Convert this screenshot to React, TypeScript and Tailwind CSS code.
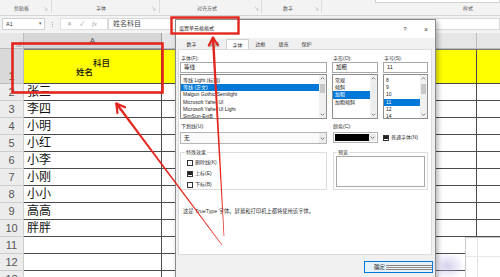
import React from 'react';

type Pt = [number, number];

function taper(a: Pt, b: Pt, w1: number, w2: number) {
  const dx = b[0] - a[0];
  const dy = b[1] - a[1];
  const l = Math.hypot(dx, dy);
  const nx = -dy / l;
  const ny = dx / l;
  const pts = [
    [a[0] + (nx * w1) / 2, a[1] + (ny * w1) / 2],
    [b[0] + (nx * w2) / 2, b[1] + (ny * w2) / 2],
    [b[0] - (nx * w2) / 2, b[1] - (ny * w2) / 2],
    [a[0] - (nx * w1) / 2, a[1] - (ny * w1) / 2],
  ];
  return pts.map((p) => p.map((v) => v.toFixed(1)).join(',')).join(' ');
}

function Chevron({ up }: { up?: boolean }) {
  return (
    <svg width="7" height="7" viewBox="0 0 7 7" className="shrink-0">
      <polyline
        points={up ? '1.8,4.3 3.5,2.6 5.2,4.3' : '1.8,2.7 3.5,4.4 5.2,2.7'}
        fill="none"
        stroke="#606060"
        strokeWidth="0.8"
      />
    </svg>
  );
}

function VScroll({ thumb }: { thumb: string }) {
  return (
    <div className="w-[7px] h-full bg-[#f0f0f0] flex flex-col shrink-0">
      <Chevron up />
      <div className="flex-1 w-full px-[1px]">
        <div className={thumb} />
      </div>
      <Chevron />
    </div>
  );
}

function ListCol({
  label,
  value,
  items,
  sel,
  thumb,
  width,
}: {
  label: string;
  value: string;
  items: string[];
  sel: number;
  thumb: string;
  width: string;
}) {
  return (
    <div className={`${width} flex flex-col shrink-0`}>
      <div className="h-[8px] leading-[8px] text-[5px] text-[#333] pl-[1px]">{label}</div>
      <div className="h-[11px] border border-[#a8a8a8] bg-white text-[5.5px] leading-[9px] pl-[3px] text-[#222]">
        {value}
      </div>
      <div className="h-[45px] mt-[1px] border border-[#8e8e8e] bg-white flex">
        <div className="flex-1 pt-[2px] overflow-hidden">
          {items.map((it, i) => (
            <div
              key={it}
              className={`h-[7.2px] leading-[7.2px] text-[5px] pl-[2px] whitespace-nowrap overflow-hidden ${
                i === sel ? 'bg-[#0078d7] text-white' : 'text-[#222]'
              }`}
            >
              {it}
            </div>
          ))}
        </div>
        <VScroll thumb={thumb} />
      </div>
    </div>
  );
}

function Check({ checked, label }: { checked?: boolean; label: string }) {
  return (
    <div className="flex items-center h-[11px] gap-[2px]">
      <div className="w-[6px] h-[6px] border border-[#333] bg-white flex items-center justify-center">
        {checked && <div className="w-[3.5px] h-[3.5px] bg-[#222]" />}
      </div>
      <span className="text-[5px] text-[#333]">{label}</span>
    </div>
  );
}

function Dialog() {
  const tabs = ['数字', '对齐', '字体', '边框', '填充', '保护'];
  return (
    <div className="absolute left-[175px] top-[19px] w-[261px] h-[262px] bg-[#f0f0f0] border border-[#8a8a8a] shadow-[2px_2px_5px_rgba(0,0,0,0.3)] flex flex-col">
      {/* title bar */}
      <div className="h-[18px] bg-white flex items-center shrink-0">
        <div className="flex-1 pl-[3px] text-[5px] text-[#222]">设置单元格格式</div>
        <div className="w-[10px] text-center text-[6px] text-[#444]">?</div>
        <div className="w-[11px]" />
        <div className="w-[10px] text-center text-[7px] leading-[7px] text-[#444]">×</div>
        <div className="w-[4px]" />
      </div>
      {/* tabs */}
      <div className="h-[11px] flex pl-[4px] shrink-0 items-end">
        {tabs.map((t, i) => (
          <div
            key={t}
            className={`w-[23px] h-[10px] text-center text-[5px] leading-[10px] text-[#333] ${
              i === 2 ? 'bg-white border border-b-0 border-[#d0d0d0]' : ''
            }`}
          >
            {t}
          </div>
        ))}
      </div>
      {/* panel */}
      <div className="ml-[2px] w-[254px] h-[206px] bg-white border border-[#dcdcdc] flex flex-col pt-[4px] pl-[1px] shrink-0">
        <div className="flex">
          <ListCol
            width="w-[147px]"
            label="字体(F):"
            value="等线"
            items={[
              '等线 Light (标题)',
              '等线 (正文)',
              'Malgun Gothic Semilight',
              'Microsoft Yahei UI',
              'Microsoft Yahei UI Light',
              'SimSun-ExtB',
            ]}
            sel={1}
            thumb="mt-[2px] h-[9px] bg-[#c8c8c8]"
          />
          <div className="w-[5px]" />
          <ListCol
            width="w-[46px]"
            label="字形(O):"
            value="加粗"
            items={['常规', '倾斜', '加粗', '加粗倾斜']}
            sel={2}
            thumb="mt-[1px] h-[28px] bg-[#ececec]"
          />
          <div className="w-[5px]" />
          <ListCol
            width="w-[45px]"
            label="字号(S):"
            value="11"
            items={['8', '9', '10', '11', '12', '14']}
            sel={3}
            thumb="mt-[2px] h-[10px] bg-[#c8c8c8]"
          />
        </div>
        {/* underline / color */}
        <div className="flex mt-[3px]">
          <div className="w-[147px] flex flex-col shrink-0">
            <div className="h-[9px] leading-[9px] text-[5px] text-[#333] pl-[1px]">下划线(U):</div>
            <div className="h-[12px] mt-[1px] border border-[#b4b4b4] bg-[#fafafa] flex">
              <div className="flex-1 text-[5.5px] leading-[10px] pl-[3px] text-[#222]">无</div>
              <div className="w-[7px] bg-[#ececec] flex items-center">
                <Chevron />
              </div>
            </div>
          </div>
          <div className="w-[5px]" />
          <div className="w-[46px] flex flex-col shrink-0 pl-[1px]">
            <div className="h-[9px] leading-[9px] text-[5px] text-[#333]">颜色(C):</div>
            <div className="h-[11px] mt-[1px] border border-[#b4b4b4] bg-white flex p-[1px]">
              <div className="flex-1 bg-black" />
              <div className="w-[7px] bg-[#ececec] flex items-center">
                <Chevron />
              </div>
            </div>
          </div>
          <div className="w-[5px]" />
          <div className="pt-[10px]">
            <Check checked label="普通字体(N)" />
          </div>
        </div>
        {/* groups */}
        <div className="flex mt-[5px]">
          <fieldset className="w-[147px] h-[41px] border border-[#dcdcdc] px-[6px] shrink-0">
            <legend className="text-[5px] text-[#333] px-[1px] ml-[-2px] leading-[6px]">特殊效果</legend>
            <div className="flex flex-col mt-[2px]">
              <Check label="删除线(K)" />
              <Check checked label="上标(E)" />
              <Check label="下标(B)" />
            </div>
          </fieldset>
          <div className="w-[6px]" />
          <fieldset className="w-[95px] h-[41px] border border-[#dcdcdc] px-[2px] shrink-0">
            <legend className="text-[5px] text-[#333] px-[1px] ml-[1px] leading-[6px]">预览</legend>
            <div className="h-[31px] border border-[#a8a8a8] bg-white mt-[1px]" />
          </fieldset>
        </div>
        <div className="mt-[17px] pl-[3px] text-[5.3px] leading-[8px] text-[#333] whitespace-nowrap">
          这是 TrueType 字体。屏幕和打印机上都将使用该字体。
        </div>
      </div>
      {/* footer */}
      <div className="flex justify-end pr-[2px] pt-[6px]">
        <div className="w-[69px] h-[12px] border border-[#0078d7] bg-[#e5f1fb] flex items-center pl-[9px] gap-[1px]">
          <span className="text-[5.5px] text-[#222]">确定</span>
          <div className="flex-1 h-[5px] border-y border-[#8a8078] flex items-center">
            <div className="w-full h-[1px] bg-[#9a9088]" />
          </div>
        </div>
      </div>
    </div>
  );
}

function Ribbon() {
  return (
    <div className="h-[16px] bg-[#f3f3f3] border-b border-[#d5d5d5] flex text-[5px] text-[#555] relative">
      <div className="w-[52px] border-r border-[#dcdcdc] flex pt-[5px] h-[13px]">
        <span className="pl-[14px]">剪贴板</span>
        <span className="ml-auto mr-[3px] text-[5px] text-[#999]">↘</span>
      </div>
      <div className="w-[108px] border-r border-[#dcdcdc] flex pt-[5px] h-[13px]">
        <span className="pl-[44px]">字体</span>
        <span className="ml-auto mr-[3px] text-[#999]">↘</span>
      </div>
      <div className="w-[102px] border-r border-[#dcdcdc] flex pt-[5px] h-[13px]">
        <span className="pl-[37px]">对齐方式</span>
        <span className="ml-auto mr-[2px] text-[#999]">↘</span>
      </div>
      <div className="w-[60px] border-r border-[#dcdcdc] flex pt-[5px] h-[13px]">
        <span className="pl-[21px]">数字</span>
        <span className="ml-auto mr-[2px] text-[#999]">↘</span>
      </div>
      <div className="flex-1 flex flex-col h-[13px]">
        <div className="ml-[53px] h-[3px] border border-t-0 border-[#d0d0d0] bg-white" />
        <span className="pl-[141px] pt-[2px]">样式</span>
      </div>
    </div>
  );
}

function FormulaBar() {
  return (
    <div className="h-[17px] bg-[#f3f3f3] flex items-start pt-[2px] pl-[2px]">
      <div className="w-[43px] h-[12px] border border-[#cfcfcf] bg-white flex items-center pl-[3px] pr-[2px]">
        <span className="text-[5.5px] text-[#333] flex-1">A1</span>
        <span className="text-[5px] text-[#666]">▾</span>
      </div>
      <div className="w-[15px] h-[12px] flex items-center justify-center">
        <div className="flex flex-col gap-[1px]">
          <div className="w-[1px] h-[1px] bg-[#aaa]" />
          <div className="w-[1px] h-[1px] bg-[#aaa]" />
          <div className="w-[1px] h-[1px] bg-[#aaa]" />
        </div>
      </div>
      <div className="w-[48px] h-[12px] bg-white border border-[#e0e0e0] flex items-center text-[#9a9a9a]">
        <span className="ml-[6px] text-[6px]">✕</span>
        <span className="ml-[8px] text-[6px]">✓</span>
        <span className="ml-[8px] text-[6.5px] italic font-['Liberation_Serif',serif]">fx</span>
      </div>
      <div className="flex-1 h-[12px] bg-white border border-[#d8d8d8] flex items-center pl-[4px]">
        <span className="text-[7px] text-[#444]">姓名科目</span>
      </div>
    </div>
  );
}

function Grid() {
  const names = ['张三', '李四', '小明', '小红', '小李', '小刚', '小小', '高高', '胖胖', '', '', ''];
  return (
    <div className="flex flex-col">
      {/* column headers */}
      <div className="h-[16px] flex">
        <div className="w-[24px] bg-[#e6e6e6] border-r border-b border-[#bdbdbd] relative">
          <div className="absolute right-[1px] bottom-[1px] w-0 h-0 border-l-[7px] border-t-[7px] border-l-transparent border-t-transparent border-r-0 border-b-0 border-[#c4c4c4] [border-right:0] [border-bottom:7px_solid_#c4c4c4] [border-left:7px_solid_transparent] [border-top:0]" />
        </div>
        <div className="w-[138px] bg-[#d6d6d6] border-r border-b border-[#9e9e9e] text-center text-[8px] leading-[16px] text-[#555]">
          A
        </div>
        <div className="w-[315px] bg-[#e6e6e6] border-r border-b border-[#bdbdbd]" />
        <div className="flex-1 bg-[#e6e6e6] border-b border-[#bdbdbd]" />
      </div>
      {/* row 1 */}
      <div className="h-[35px] flex">
        <div className="w-[24px] bg-[#d9d9d9] border-r border-b border-[#bdbdbd] flex items-end justify-center text-[11px] leading-[13px] text-[#555]">
          1
        </div>
        <div className="w-[138px] bg-[#ffff00] border-r border-b border-[#4a4a4a] border-t border-t-[#7a7a7a] flex flex-col pt-[9px] text-[8.5px] leading-[9px] font-medium text-[#111]">
          <span className="pl-[69px]">科目</span>
          <span className="pl-[52px]">姓名</span>
        </div>
        <div className="w-[315px] bg-[#ffff00] border-r border-b border-[#4a4a4a] border-t border-t-[#7a7a7a]" />
        <div className="flex-1 bg-[#ffff00] border-b border-[#4a4a4a] border-t border-t-[#7a7a7a]" />
      </div>
      {names.map((n, i) => (
        <div key={i} className="h-[17px] flex shrink-0">
          <div className="w-[24px] bg-[#ececec] border-r border-b border-[#cdcdcd] flex items-end justify-center text-[11px] leading-[15px] text-[#555]">
            {i + 2}
          </div>
          <div className="w-[138px] border-r border-b border-[#4a4a4a] pl-[3px] text-[12px] leading-[16px] text-[#111]">
            {n}
          </div>
          <div className="w-[315px] border-r border-b border-[#4a4a4a]" />
          <div className="flex-1 border-b border-[#4a4a4a]" />
        </div>
      ))}
    </div>
  );
}

function Annotations() {
  const red = '#e3251d';
  const a1Tip: Pt = [213, 37];
  const a1Tail: Pt = [224, 236];
  const a2Tip: Pt = [116, 103];
  const a2Tail: Pt = [222, 245];
  return (
    <svg className="absolute left-0 top-0 pointer-events-none" width="500" height="277" viewBox="0 0 500 277">
      <rect x="12.5" y="43.5" width="150" height="49" fill="none" stroke={red} strokeWidth="2.6" />
      <rect x="171.5" y="17.5" width="67" height="16" fill="none" stroke={red} strokeWidth="2.4" />
      <polygon points={taper(a1Tip, a1Tail, 2.6, 0.6)} fill={red} />
      <polyline
        points="208.8,45.5 213,37.5 217.8,45"
        fill="none"
        stroke={red}
        strokeWidth="2.2"
        strokeLinecap="round"
        strokeLinejoin="round"
      />
      <polygon points={taper(a2Tip, a2Tail, 2.6, 0.6)} fill={red} />
      <polyline
        points="117.5,113 116.3,103.4 125,107.3"
        fill="none"
        stroke={red}
        strokeWidth="2.2"
        strokeLinecap="round"
        strokeLinejoin="round"
      />
    </svg>
  );
}

export default function App() {
  return (
    <div className="relative w-[500px] h-[277px] overflow-hidden bg-white font-['Liberation_Sans','Noto_Sans_CJK_SC',sans-serif]">
      <Ribbon />
      <FormulaBar />
      <Grid />
      {/* overlay box bottom right */}
      <div className="absolute left-[465px] top-[237px] w-[40px] h-[45px] bg-white border-l border-t border-[#c8c8c8]">
        <div className="absolute left-[11px] top-0 w-[1px] h-full bg-[#e0e0e0]" />
        <div className="absolute left-0 top-[18px] w-full h-[1px] bg-[#e8e8e8]" />
      </div>
      <Dialog />
      <div className="absolute left-[430px] top-[252px] w-[35px] h-[28px] bg-[radial-gradient(ellipse_at_center,rgba(180,170,225,0.55),rgba(255,255,255,0)_70%)]" />
      <Annotations />
    </div>
  );
}
